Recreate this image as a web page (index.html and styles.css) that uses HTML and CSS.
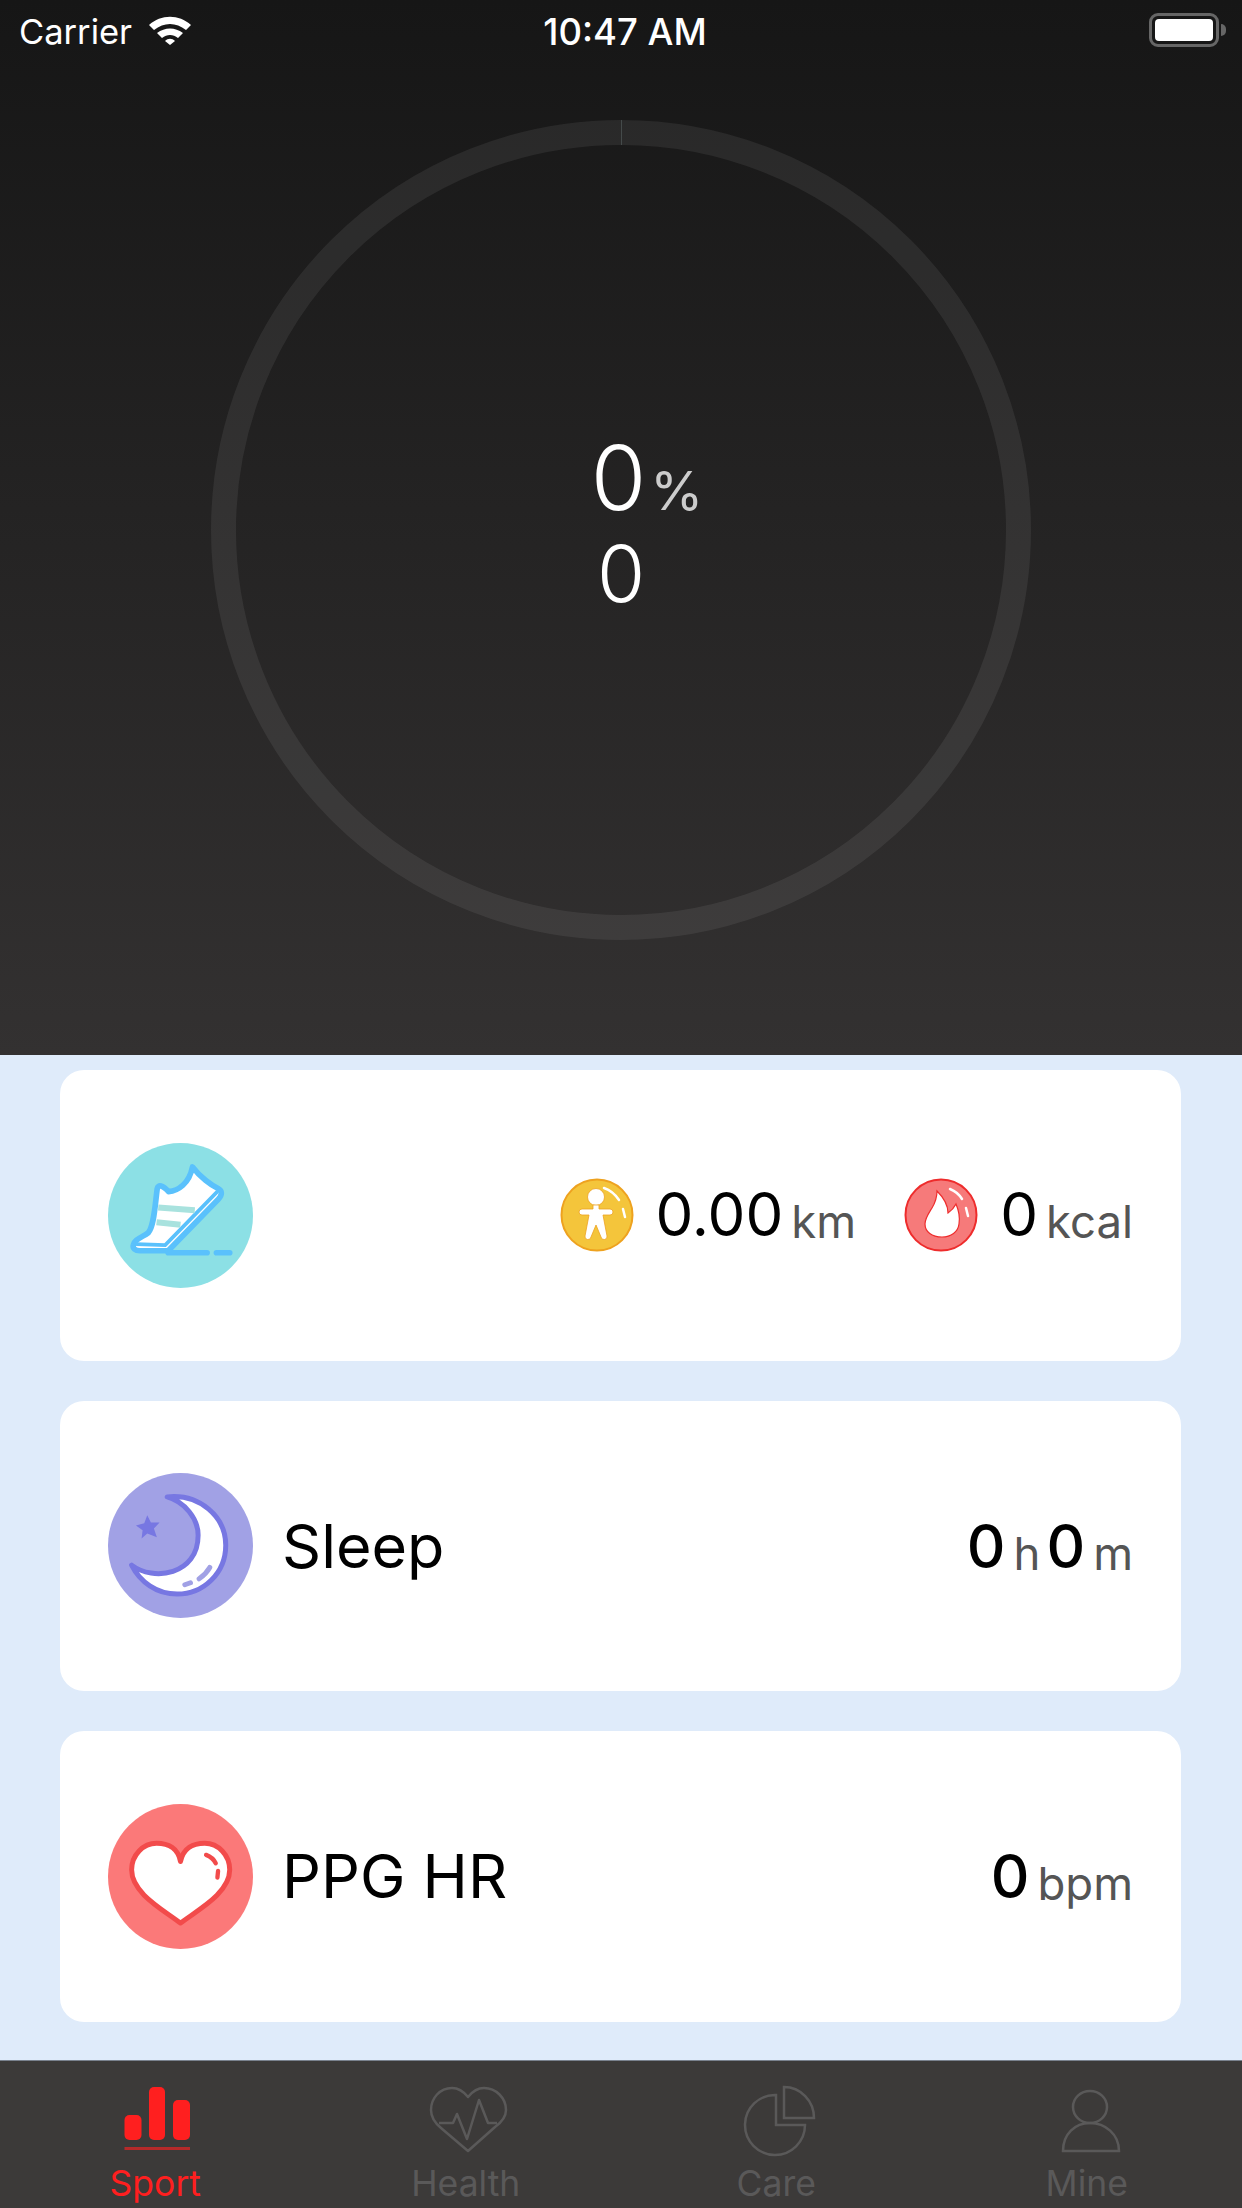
FILE: index.html
```html
<!DOCTYPE html>
<html lang="en">
<head>
  <meta charset="UTF-8">
  <title>Sport</title>
  <link rel="stylesheet" href="styles.css">
</head>
<body>
  <div class="hero">
    <div class="status">
      <div class="status-left">
        <span>Carrier</span>
        <svg class="wifi" viewBox="0 0 42 30">
          <path d="M0 10 C12 -1 30 -1 42 10 L37 15 C27 7 15 7 5 15 Z" fill="#fff"/>
          <path d="M8 18 C16 12 26 12 34 18 L29 23 C24 19 18 19 13 23 Z" fill="#fff"/>
          <path d="M16 26 C19 23 23 23 26 26 L21 30 Z" fill="#fff"/>
        </svg>
      </div>
      <div class="status-time">10:47 AM</div>
      <div class="status-right">
        <div class="battery"><div class="battery-level"></div></div>
        <div class="battery-cap"></div>
      </div>
    </div>
    <div class="ring">
      <div class="ring-tick"></div>
      <div class="ring-top"><span class="pct-value">0</span><span class="pct-unit">%</span></div>
      <div class="ring-steps">0</div>
    </div>
  </div>

  <div class="cards">
    <div class="card">
      <svg class="card-icon" viewBox="54 68 436 436">
        <circle cx="272" cy="286" r="218" fill="#8ce0e5"/>
        <path d="M130 375 C132 358 160 350 175 338 C192 320 195 260 202 205 C205 192 218 195 236 214 C265 212 298 190 308 140 C330 170 365 195 385 205 C398 212 398 225 385 238 L235 392 L150 392 C135 392 128 385 130 375 Z" fill="#fff" stroke="#5ac1fc" stroke-width="17" stroke-linejoin="round"/>
        <path d="M382 215 L226 375 L140 372" fill="none" stroke="#5ac1fc" stroke-width="11" stroke-linecap="round"/>
        <path d="M205 262 L315 270 M200 306 L272 314" fill="none" stroke="#a8e2de" stroke-width="18"/>
        <path d="M235 398 H352 M380 398 H420" fill="none" stroke="#5ac1fc" stroke-width="17" stroke-linecap="round"/>
      </svg>
      <div class="card-values">
        <svg class="coin" viewBox="0 0 74 74">
          <circle cx="37" cy="37" r="35.5" fill="#f4c53b" stroke="#eea21f" stroke-width="2"/>
          <circle cx="36" cy="19" r="8.5" fill="#fff" stroke="#eea21f" stroke-width="0.8"/>
          <path d="M19 34 A3 3 0 0 1 22 31 H33 V27 H39 V31 H50 A3 3 0 0 1 50 37 H43 L47 58 A3 3 0 0 1 41 59 L36 47 L31 59 A3 3 0 0 1 25 58 L29 37 H22 A3 3 0 0 1 19 34 Z" fill="#fff" stroke="#eea21f" stroke-width="0.8"/>
          <path d="M44 10 C50 12 55 16 59 22 M63 31 L65 39" fill="none" stroke="#fff" stroke-width="2.5" stroke-linecap="round"/>
        </svg>
        <span class="value">0.00</span><span class="unit">km</span>
        <svg class="coin coin-kcal" viewBox="0 0 74 74">
          <circle cx="37" cy="37" r="35.5" fill="#f67a7a" stroke="#ee2c2c" stroke-width="2"/>
          <path d="M33 13 C40 20 44 27 44 35 C47 33 50 30 52 26 C55 33 56 40 55 46 C54 54 47 59 38 59 C28 59 21 54 21 46 C21 40 25 35 28 30 C31 25 33 19 33 13 Z" fill="#fff" stroke="#ee2c2c" stroke-width="1.2"/>
          <path d="M46 11 C51 13 55 16 58 21 M62 30 L64 38" fill="none" stroke="#fff" stroke-width="2.5" stroke-linecap="round"/>
        </svg>
        <span class="value">0</span><span class="unit">kcal</span>
      </div>
    </div>

    <div class="card">
      <svg class="card-icon" viewBox="54 68 436 436">
        <circle cx="272" cy="286" r="218" fill="#a1a1e5"/>
        <path d="M232 140 C330 130 408 200 408 285 C408 370 340 432 262 432 C200 432 150 395 125 345 C190 395 325 375 325 255 C325 205 285 155 232 140 Z" fill="#fff" stroke="#7777e2" stroke-width="15" stroke-linejoin="round"/>
        <path d="M172 195 L183 217 L209 217 L192 235 L201 261 L172 250 L155 265 L158 240 L138 226 L163 219 Z" fill="#7777e2"/>
        <path d="M285 404 L302 398 M328 386 C340 378 352 366 360 352" fill="none" stroke="#a1a1e5" stroke-width="15" stroke-linecap="round"/>
      </svg>
      <div class="card-title">Sleep</div>
      <div class="card-values">
        <span class="value value-bold">0</span><span class="unit unit-tight">h</span>
        <span class="value value-bold">0</span><span class="unit">m</span>
      </div>
    </div>

    <div class="card">
      <svg class="card-icon" viewBox="54 42 436 436">
        <circle cx="272" cy="260" r="218" fill="#fb7979"/>
        <path d="M272 215 C265 175 235 160 200 160 C160 160 125 195 125 240 C125 310 220 360 272 400 C325 360 420 310 420 240 C420 195 385 160 345 160 C310 160 280 175 272 215 Z" fill="#fff" stroke="#f24b4b" stroke-width="15" stroke-linejoin="round"/>
        <path d="M349 195 C362 200 372 208 378 220 M385 243 L383 263" fill="none" stroke="#f24b4b" stroke-width="13" stroke-linecap="round"/>
      </svg>
      <div class="card-title">PPG HR</div>
      <div class="card-values">
        <span class="value value-bold">0</span><span class="unit">bpm</span>
      </div>
    </div>
  </div>

  <div class="tabbar">
    <div class="tab tab-active">
      <svg class="tab-icon" viewBox="0 0 84 72">
        <rect x="11.5" y="31" width="17" height="25" rx="5" fill="#ff1f1f"/>
        <rect x="36" y="3" width="16" height="53" rx="5" fill="#ff1f1f"/>
        <rect x="60" y="16" width="17" height="40" rx="5" fill="#ff1f1f"/>
        <rect x="11.5" y="63" width="65.5" height="3" fill="#b52a2a"/>
      </svg>
      <span>Sport</span>
    </div>
    <div class="tab">
      <svg class="tab-icon" viewBox="0 0 84 72">
        <path d="M44 13 C40 8 34 4 28 4 C16 4 7 14 7 26 C7 33 11 39 17 44 L44 67 L71 43 C78 38 82 33 82 26 C82 14 72 4 60 4 C54 4 48 8 44 13 Z" fill="none" stroke="#5a5959" stroke-width="2.5" stroke-linejoin="round"/>
        <path d="M15 39 H29 L33 30 L43 55 L55 16 L64 39 H73" fill="none" stroke="#5a5959" stroke-width="2.5" stroke-linejoin="round"/>
      </svg>
      <span>Health</span>
    </div>
    <div class="tab">
      <svg class="tab-icon" viewBox="0 0 84 72">
        <path d="M42 11 A30 30 0 1 0 71 41 H42 Z" fill="none" stroke="#5a5959" stroke-width="2.5"/>
        <path d="M50 3 A30 31 0 0 1 80 34 H50 Z" fill="none" stroke="#5a5959" stroke-width="2.5"/>
      </svg>
      <span>Care</span>
    </div>
    <div class="tab">
      <svg class="tab-icon" viewBox="0 0 84 72">
        <ellipse cx="45" cy="23" rx="17" ry="16" fill="none" stroke="#5a5959" stroke-width="2.5"/>
        <path d="M18 67 C18 50 30 39 45 39 C60 39 74 50 74 67 Z" fill="none" stroke="#5a5959" stroke-width="2.5"/>
      </svg>
      <span>Mine</span>
    </div>
  </div>
</body>
</html>
```

FILE: styles.css
```css
* {
  box-sizing: border-box;
}
body {
  margin: 0;
  height: 2208px;
  display: flex;
  flex-direction: column;
  font-family: Inter, "Liberation Sans", sans-serif;
  background: #dfebfa;
  color: #000;
  overflow: hidden;
}

/* top part with the ring */
.hero {
  height: 1055px;
  background: linear-gradient(#161616, #333131);
  color: #fff;
}
.status {
  height: 120px;
  padding: 12px 16px 0 19px;
  display: grid;
  grid-template-columns: 1fr auto 1fr;
  align-items: start;
  font-size: 34.5px;
  line-height: 40px;
}
.status-left {
  display: flex;
  gap: 17px;
}
.wifi {
  width: 42px;
  height: 30px;
  margin-top: 3px;
}
.status-time {
  font-size: 36.5px;
  font-weight: 500;
  margin-left: 5px;
}
.status-right {
  display: flex;
  justify-content: flex-end;
  align-items: center;
  gap: 2px;
  height: 34px;
  margin-top: 1px;
}
.battery {
  width: 70px;
  height: 34px;
  border: 3px solid #666;
  border-radius: 9px;
  padding: 3px;
}
.battery-level {
  height: 100%;
  background: #fff;
  border-radius: 4px;
}
.battery-cap {
  width: 5px;
  height: 12px;
  background: #666;
  border-radius: 0 5px 5px 0;
}
.ring {
  position: relative;
  width: 820px;
  height: 820px;
  margin: 0 auto;
  border: 25px solid rgba(255, 255, 255, 0.07);
  border-radius: 50%;
  display: flex;
  flex-direction: column;
  align-items: center;
  justify-content: center;
  font-weight: 300;
}
.ring-tick {
  position: absolute;
  top: -25px;
  left: 50%;
  width: 1px;
  height: 25px;
  background: #444a4a;
}
.ring-top {
  display: flex;
  align-items: baseline;
  line-height: 90px;
  margin-top: -16px;
  margin-left: 2px;
}
.pct-value {
  font-size: 90px;
}
.pct-unit {
  font-size: 54px;
  font-weight: 400;
  color: #ccc;
  margin-left: 4px;
  margin-right: -50px;
}
.ring-steps {
  font-size: 78px;
  line-height: 76px;
}

/* cards */
.cards {
  flex: 1;
  padding: 15px 61px 0 60px;
  display: flex;
  flex-direction: column;
  gap: 40px;
}
.card {
  height: 290.5px;
  padding: 0 48px;
  background: #fff;
  border-radius: 24px;
  display: flex;
  align-items: center;
}
.card-icon {
  width: 145px;
  height: 145px;
}
.card-title {
  font-size: 61px;
  margin-left: 29px;
}
.card-values {
  margin-left: auto;
  display: flex;
  align-items: baseline;
}
.coin {
  width: 74px;
  height: 74px;
  align-self: center;
  margin-right: 22px;
}
.coin-kcal {
  margin-left: 48px;
}
.value {
  font-size: 60px;
}
.value-bold {
  font-weight: 500;
}
.unit {
  font-size: 45.5px;
  color: #555;
  margin-left: 8px;
  position: relative;
  top: 2px;
}
.unit-tight {
  margin-right: 6px;
}

/* bottom tabs */
.tabbar {
  height: 148px;
  background: #3c3a39;
  border-top: 1px solid #7a828e;
  display: grid;
  grid-template-columns: repeat(4, 1fr);
  padding-top: 23px;
}
.tab {
  display: flex;
  flex-direction: column;
  align-items: center;
  color: #5a5959;
  font-size: 35.5px;
  line-height: 44px;
}
.tab span {
  margin-top: 6px;
}
.tab-active {
  color: #ff1f1f;
}
.tab-icon {
  width: 84px;
  height: 72px;
  flex: none;
  overflow: visible;
}
```
